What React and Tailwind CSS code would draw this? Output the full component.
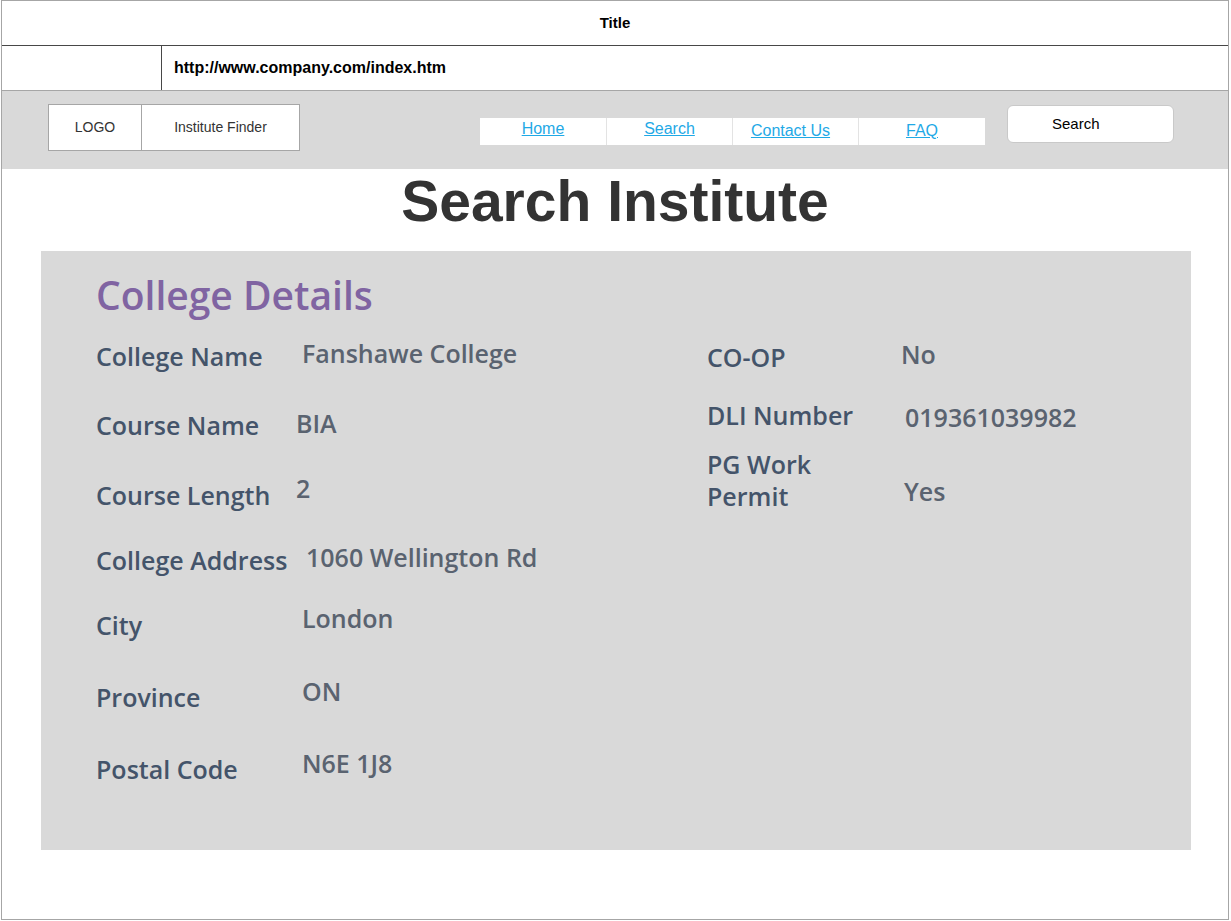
const arial = { fontFamily: '"Liberation Sans", Arial, sans-serif' };

const NAV_LINKS = [
  { label: "Home", cls: "w-[126px] pt-[1px]" },
  { label: "Search", cls: "w-[126px] pt-[1px] border-l border-[#e3e3e3]" },
  { label: "Contact Us", cls: "w-[126px] pt-[3px] pr-[10px] border-l border-[#e3e3e3]" },
  { label: "FAQ", cls: "w-[127px] pt-[3px] border-l border-[#e3e3e3]" },
];

// left column rows: height of row, value top pad, value x nudge
const LEFT_ROWS = [
  { label: "College Name", value: "Fanshawe College", h: "h-[69px]", vt: "pt-[4px]", vx: "ml-0" },
  { label: "Course Name", value: "BIA", h: "h-[70px]", vt: "pt-[5px]", vx: "-ml-[6px]" },
  { label: "Course Length", value: "2", h: "h-[65px]", vt: "pt-0", vx: "-ml-[6px]" },
  { label: "College Address", value: "1060 Wellington Rd", h: "h-[65px]", vt: "pt-[4px]", vx: "ml-[4px]" },
  { label: "City", value: "London", h: "h-[72px]", vt: "pt-0", vx: "ml-0" },
  { label: "Province", value: "ON", h: "h-[72px]", vt: "pt-[1px]", vx: "ml-0" },
  { label: "Postal Code", value: "N6E 1J8", h: "h-[60px]", vt: "pt-[1px]", vx: "ml-0" },
];

export default function App() {
  return (
    <div className="w-[1231px] h-[921px] bg-white" style={arial}>
      <div className="ml-px w-[1228px] h-[920px] border border-[#a6a6a6] flex flex-col">
        {/* title bar */}
        <div className="h-[45px] shrink-0 flex items-center justify-center border-b border-[#474747] text-[15px] font-bold text-black">
          Title
        </div>
        {/* address bar */}
        <div className="h-[45px] shrink-0 flex border-b border-[#a6a6a6]">
          <div className="w-[160px] border-r border-[#474747]" />
          <div className="pl-[12px] flex items-center text-[16px] font-bold text-black">http://www.company.com/index.htm</div>
        </div>

        {/* nav */}
        <div className="h-[78px] shrink-0 bg-[#d9d9d9] flex items-start">
          <div className="ml-[46px] mt-[13px] flex text-[14px] text-[#333333]">
            <div className="w-[94px] h-[47px] border border-[#a6a6a6] bg-white flex items-center justify-center">LOGO</div>
            <div className="w-[158px] h-[47px] border-y border-r border-[#a6a6a6] bg-white flex items-center justify-center">Institute Finder</div>
          </div>
          <div className="ml-[180px] mt-[27px] w-[505px] h-[27px] bg-white flex">
            {NAV_LINKS.map((l) => (
              <div key={l.label} className={"shrink-0 text-center text-[16px] leading-5 " + l.cls}>
                <a href="#" className="text-[#1fa9e6] underline">{l.label}</a>
              </div>
            ))}
          </div>
          <div className="ml-[22px] mt-[14px] w-[167px] h-[38px] bg-white border border-[#c9c9c9] rounded-md flex items-center pl-[44px] text-[15px] text-black">
            Search
          </div>
        </div>

        {/* page heading */}
        <h1 className="mt-[4px] text-center text-[57px] leading-none font-bold text-[#333333]">Search Institute</h1>

        {/* details panel */}
        <div
          className="mt-[21px] ml-[39px] w-[1150px] h-[599px] shrink-0 bg-[#d9d9d9] pl-[55px] pt-[24px]"
          style={{ fontFamily: '"Open Sans", "Noto Sans", sans-serif' }}
        >
          <h2 className="text-[39px] leading-none font-semibold text-[#8064a2]">College Details</h2>

          <div className="mt-[23px] flex text-[25px] leading-none font-semibold">
            <div className="w-[611px]">
              {LEFT_ROWS.map((r) => (
                <div key={r.label} className={"flex " + r.h}>
                  <div className="w-[206px] pt-[7px] text-[#44546a] whitespace-nowrap">{r.label}</div>
                  <div className={"text-[#5a6370] whitespace-nowrap " + r.vt + " " + r.vx}>{r.value}</div>
                </div>
              ))}
            </div>

            <div className="w-[380px]">
              <div className="flex h-[59px]">
                <div className="w-[194px] pt-[8px] text-[#44546a]">CO-OP</div>
                <div className="pt-[5px] text-[#5a6370]">No</div>
              </div>
              <div className="flex h-[49px]">
                <div className="w-[194px] pt-[7px] text-[#44546a]">DLI Number</div>
                <div className="pt-[9px] ml-[4px] text-[#5a6370]">019361039982</div>
              </div>
              <div className="flex h-[80px]">
                <div className="w-[194px] pt-[3px] leading-[32px] text-[#44546a]">
                  PG Work
                  <br />
                  Permit
                </div>
                <div className="pt-[34px] ml-[3px] text-[#5a6370]">Yes</div>
              </div>
            </div>
          </div>
        </div>
      </div>
    </div>
  );
}
